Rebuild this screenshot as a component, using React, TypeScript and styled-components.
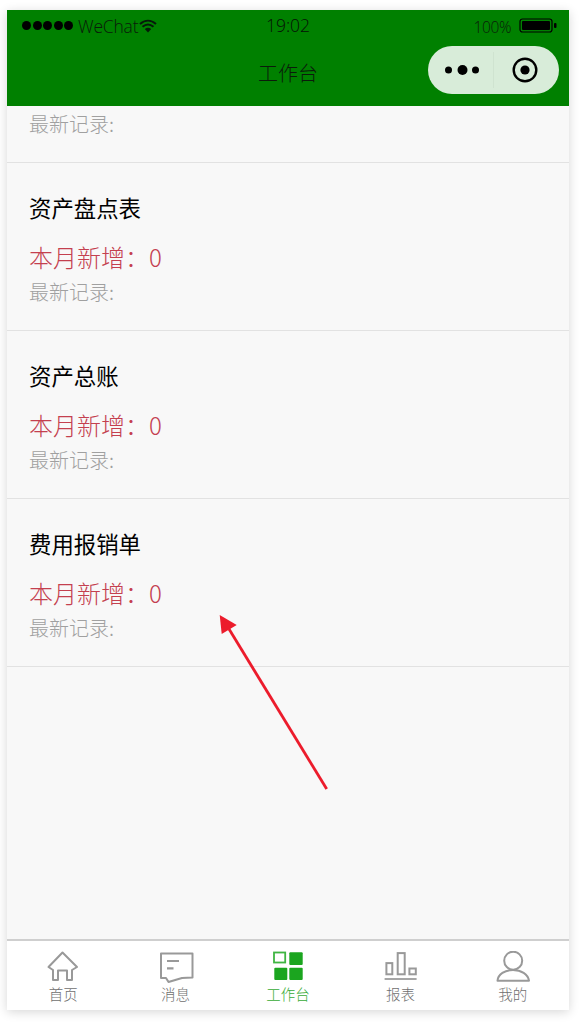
import React from "react";
import styled, { createGlobalStyle } from "styled-components";

const Global = createGlobalStyle`
  html, body { margin: 0; padding: 0; background: #fff; }
  body { font-family: "Noto Sans CJK SC", "Open Sans", sans-serif; }
`;
const Page = styled.div`
  width: 586px; height: 1022px; box-sizing: border-box; padding: 10px 17px 12px 7px;
`;
const Phone = styled.div`
  position: relative; width: 562px; height: 1000px; display: flex; flex-direction: column;
  background: #f8f8f8; box-shadow: 0 2px 10px rgba(0,0,0,.16);
`;
const Header = styled.header`
  height: 96px; flex: none; background: #008000; color: #0a1a0a; display: flex; flex-direction: column;
`;
const Status = styled.div`
  height: 30px; padding: 1px 12px 0 15px; box-sizing: border-box;
  display: grid; grid-template-columns: 1fr auto 1fr; align-items: center;
`;
const StatusLeft = styled.div`
  display: flex; align-items: center; font: 300 17.5px "Open Sans", sans-serif; letter-spacing: -.2px;
`;
const Dots = styled.div`display: flex; gap: 1.5px; margin-right: 5px;`;
const Dot = styled.i`width: 9px; height: 9px; border-radius: 50%; background: #000; display: block;`;
const Time = styled.div`font: 300 17.5px "Open Sans", sans-serif; color: #061006; margin: -2px 3px 0 0;`;
const StatusRight = styled.div`
  display: flex; justify-content: flex-end; align-items: center; gap: 8px;
  font: 300 15.5px "Open Sans", sans-serif; letter-spacing: -.4px;
`;
const Percent = styled.span`margin-top: 3px;`;
const NavBar = styled.div`
  flex: 1; position: relative; display: flex; justify-content: center; align-items: center;
  padding-bottom: 2px; font-size: 20px; font-weight: 300; color: #0b1c0b;
`;
const Capsule = styled.div`
  position: absolute; left: 421px; top: 6px; width: 131px; height: 48px; border-radius: 24px;
  background: #d8ecd9; display: flex; align-items: center;
`;
const CapsulePart = styled.div<{ $w: number }>`
  width: ${p => p.$w}px; height: 36px; display: flex; align-items: center; justify-content: center;
  & + & { border-left: 1px solid #cfe3d0; }
`;
const List = styled.main`flex: 1; display: flex; flex-direction: column; overflow: hidden;`;
const Row = styled.section<{ $clipped?: boolean }>`
  height: ${p => (p.$clipped ? "57px" : "168px")}; box-sizing: border-box; flex: none;
  border-bottom: 1px solid #e2e2e2; padding: ${p => (p.$clipped ? "1px" : "26px")} 23px 0 22px;
`;
const Title = styled.div`font-size: 22.4px; line-height: 36px; color: #000; font-weight: 400;`;
const Count = styled.div`font-size: 24px; line-height: 36px; color: #c4404f; margin-top: 14px; font-weight: 300;`;
const Latest = styled.div`font-size: 20px; line-height: 32px; color: #a0a0a0; font-weight: 300; margin-top: 1px;`;
const Arrow = styled.svg`position: absolute; left: 203px; top: 590px;`;
const TabBar = styled.nav`
  height: 71px; flex: none; background: #fff; border-top: 2px solid #cfcfcf; box-sizing: border-box;
  display: grid; grid-template-columns: repeat(5, 1fr);
`;
const Tab = styled.div<{ $active?: boolean }>`
  display: flex; flex-direction: column; align-items: center; padding-top: 10px;
  color: ${p => (p.$active ? "#37ab37" : "#6f6f6f")}; font-size: 14.5px; line-height: 20px; font-weight: 300;
`;
const TabIcon = styled.svg`display: block; width: 36px; height: 34px; margin-bottom: -1px;`;

const Entry = ({ title }: { title: string }) => (
  <Row>
    <Title>{title}</Title>
    <Count>本月新增：0</Count>
    <Latest>最新记录:</Latest>
  </Row>
);

const s = { fill: "none", stroke: "#999", strokeWidth: 2 };

export default function App() {
  return (
    <Page>
      <Global />
      <Phone>
        <Header>
          <Status>
            <StatusLeft>
              <Dots><Dot /><Dot /><Dot /><Dot /><Dot /></Dots>
              WeChat
              <svg width="18" height="14" viewBox="0 0 18 14" style={{ marginLeft: 1 }}>
                <path d="M1 5 C6 0.5 12 0.5 17 5 M3.5 7.8 C7 4.8 11 4.8 14.5 7.8" fill="none" stroke="#06180a" strokeWidth="2" />
                <path d="M5.8 10 C8 8.4 10 8.4 12.2 10 L9 13.6 Z" fill="#06180a" />
              </svg>
            </StatusLeft>
            <Time>19:02</Time>
            <StatusRight>
              <Percent>100%</Percent>
              <svg width="38" height="15" viewBox="0 0 38 15">
                <rect x="1" y="1" width="32" height="13" rx="2.5" fill="none" stroke="#000" strokeWidth="1.2" />
                <rect x="3" y="3" width="28" height="9" rx="1" fill="#000" />
                <rect x="35" y="5" width="2.5" height="5" rx="1" fill="#000" />
              </svg>
            </StatusRight>
          </Status>
          <NavBar>
            工作台
            <Capsule>
              <CapsulePart $w={65}>
                <svg width="36" height="14" viewBox="0 0 36 14">
                  <circle cx="5.5" cy="7" r="3.5" fill="#000" /><circle cx="19.5" cy="7" r="5" fill="#000" /><circle cx="32.5" cy="7" r="3.5" fill="#000" />
                </svg>
              </CapsulePart>
              <CapsulePart $w={62}>
                <svg width="26" height="26" viewBox="0 0 26 26">
                  <circle cx="13" cy="13" r="11.3" fill="none" stroke="#000" strokeWidth="2.4" /><circle cx="13" cy="13" r="4.6" fill="#000" />
                </svg>
              </CapsulePart>
            </Capsule>
          </NavBar>
        </Header>
        <List>
          <Row $clipped><Latest>最新记录:</Latest></Row>
          <Entry title="资产盘点表" />
          <Entry title="资产总账" />
          <Entry title="费用报销单" />
        </List>
        <Arrow width="130" height="200" viewBox="0 0 130 200">
          <path d="M116.7 189 L19 29" stroke="#ec1c2c" strokeWidth="2.8" fill="none" />
          <path d="M9.7 15 L26.7 25 L11.7 34 Z" fill="#ec1c2c" />
        </Arrow>
        <TabBar>
          <Tab>
            <TabIcon viewBox="0 0 36 34">
              <path {...s} d="M8 19 L3.5 16 L17.5 1.5 L32 16 L27 19 V29 H22 V19.5 H13 V29 H8 Z" strokeLinejoin="round" />
            </TabIcon>
            首页
          </Tab>
          <Tab>
            <TabIcon viewBox="0 0 36 34">
              <path {...s} d="M3 2.5 H34.5 V26.5 L24 27 L10.5 31 L8 27 H3 Z" strokeLinejoin="round" />
              <path d="M9 10 H21 M9 17.3 H15.5" stroke="#999" strokeWidth="2.2" fill="none" />
            </TabIcon>
            消息
          </Tab>
          <Tab $active>
            <TabIcon viewBox="0 0 36 34">
              <rect x="4" y="1.5" width="11.2" height="10" fill="none" stroke="#3fb542" strokeWidth="1.8" />
              <rect x="19.3" y="1.3" width="13.4" height="12.7" rx="1" fill="#1ba51f" />
              <rect x="4.3" y="16.7" width="13" height="12.3" rx="1" fill="#1ba51f" />
              <rect x="19.3" y="16.7" width="13.4" height="12.3" rx="1" fill="#1ba51f" />
            </TabIcon>
            工作台
          </Tab>
          <Tab>
            <TabIcon viewBox="0 0 36 34">
              <rect x="4.4" y="12.1" width="5.9" height="11.2" {...s} />
              <rect x="15.7" y="2.1" width="7" height="21.2" {...s} />
              <rect x="27.4" y="17.5" width="6.4" height="5.8" {...s} />
              <path d="M2.6 28 H34.6" stroke="#a6a6a6" strokeWidth="2" />
            </TabIcon>
            报表
          </Tab>
          <Tab>
            <TabIcon viewBox="0 0 36 34">
              <circle cx="18.2" cy="9.7" r="9" {...s} />
              <path {...s} d="M2.5 29.7 C3 23 10 19 18 19 C26 19 33 23 34 29.7 Z" strokeLinejoin="round" />
            </TabIcon>
            我的
          </Tab>
        </TabBar>
      </Phone>
    </Page>
  );
}
